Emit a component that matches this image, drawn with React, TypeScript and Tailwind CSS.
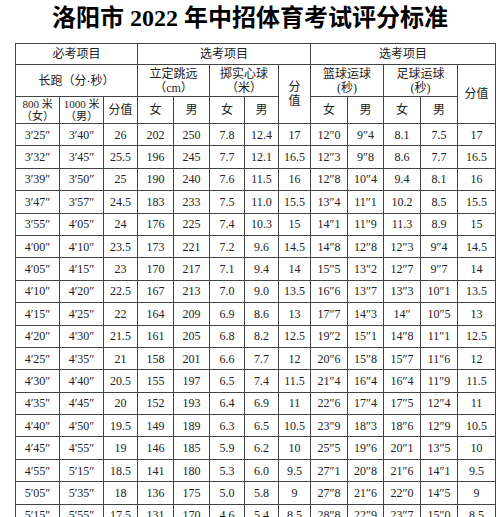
const COLS = [44, 44, 34, 36, 36, 35, 34, 32, 37, 36, 37, 37, 38];

const ROWS: string[][] = [
  ["3′25″", "3′40″", "26", "202", "250", "7.8", "12.4", "17", "12″0", "9″4", "8.1", "7.5", "17"],
  ["3′32″", "3′45″", "25.5", "196", "245", "7.7", "12.1", "16.5", "12″3", "9″8", "8.6", "7.7", "16.5"],
  ["3′39″", "3′50″", "25", "190", "240", "7.6", "11.5", "16", "12″8", "10″4", "9.4", "8.1", "16"],
  ["3′47″", "3′57″", "24.5", "183", "233", "7.5", "11.0", "15.5", "13″4", "11″1", "10.2", "8.5", "15.5"],
  ["3′55″", "4′05″", "24", "176", "225", "7.4", "10.3", "15", "14″1", "11″9", "11.3", "8.9", "15"],
  ["4′00″", "4′10″", "23.5", "173", "221", "7.2", "9.6", "14.5", "14″8", "12″8", "12″3", "9″4", "14.5"],
  ["4′05″", "4′15″", "23", "170", "217", "7.1", "9.4", "14", "15″5", "13″2", "12″7", "9″7", "14"],
  ["4′10″", "4′20″", "22.5", "167", "213", "7.0", "9.0", "13.5", "16″6", "13″7", "13″3", "10″1", "13.5"],
  ["4′15″", "4′25″", "22", "164", "209", "6.9", "8.6", "13", "17″7", "14″3", "14″", "10″5", "13"],
  ["4′20″", "4′30″", "21.5", "161", "205", "6.8", "8.2", "12.5", "19″2", "15″1", "14″8", "11″1", "12.5"],
  ["4′25″", "4′35″", "21", "158", "201", "6.6", "7.7", "12", "20″6", "15″8", "15″7", "11″6", "12"],
  ["4′30″", "4′40″", "20.5", "155", "197", "6.5", "7.4", "11.5", "21″4", "16″4", "16″4", "11″9", "11.5"],
  ["4′35″", "4′45″", "20", "152", "193", "6.4", "6.9", "11", "22″6", "17″4", "17″5", "12″4", "11"],
  ["4′40″", "4′50″", "19.5", "149", "189", "6.3", "6.5", "10.5", "23″9", "18″3", "18″6", "12″9", "10.5"],
  ["4′45″", "4′55″", "19", "146", "185", "5.9", "6.2", "10", "25″5", "19″6", "20″1", "13″5", "10"],
  ["4′55″", "5′15″", "18.5", "141", "180", "5.3", "6.0", "9.5", "27″1", "20″8", "21″6", "14″1", "9.5"],
  ["5′05″", "5′35″", "18", "136", "175", "5.0", "5.8", "9", "27″8", "21″6", "22″0", "14″5", "9"],
  ["5′15″", "5′55″", "17.5", "131", "170", "4.6", "5.4", "8.5", "28″8", "22″9", "23″7", "15″0", "8.5"],
];

const cell = "border border-[#444] p-0 text-center align-middle";

export default function App() {
  return (
    <div className="w-[500px] h-[517px] overflow-hidden bg-white text-[#222] font-['Liberation_Serif','Noto_Sans_CJK_SC',serif]">
      <h1 className="h-[43px] pt-[3px] text-center text-[24px] font-bold leading-[30px] text-black">
        洛阳市 2022 年中招体育考试评分标准
      </h1>
      <table className="ml-[15px] w-[480px] table-fixed border-collapse text-[12px] leading-[14px]">
        <colgroup>
          {COLS.map((w, i) => (
            <col key={i} style={{ width: w }} />
          ))}
        </colgroup>
        <thead>
          <tr className="h-[21px]">
            <td colSpan={3} className={cell}>必考项目</td>
            <td colSpan={5} className={cell}>选考项目</td>
            <td colSpan={5} className={cell}>选考项目</td>
          </tr>
          <tr className="h-[32px]">
            <td colSpan={3} className={cell}>长跑（分·秒）</td>
            <td colSpan={2} className={cell}>
              立定跳远
              <br />
              （cm）
            </td>
            <td colSpan={2} className={cell}>
              掷实心球
              <br />
              （米）
            </td>
            <td rowSpan={2} className={cell}>
              分
              <br />
              值
            </td>
            <td colSpan={2} className={cell}>
              篮球运球
              <br />
              (秒)
            </td>
            <td colSpan={2} className={cell}>
              足球运球
              <br />
              (秒)
            </td>
            <td rowSpan={2} className={cell}>分值</td>
          </tr>
          <tr className="h-[27px]">
            <td className={`${cell} text-[11px] leading-[12px]`}>
              800 米
              <br />
              （女）
            </td>
            <td className={`${cell} text-[11px] leading-[12px]`}>
              1000 米
              <br />
              （男）
            </td>
            <td className={cell}>分值</td>
            <td className={cell}>女</td>
            <td className={cell}>男</td>
            <td className={cell}>女</td>
            <td className={cell}>男</td>
            <td className={cell}>女</td>
            <td className={cell}>男</td>
            <td className={cell}>女</td>
            <td className={cell}>男</td>
          </tr>
        </thead>
        <tbody>
          {ROWS.map((r, i) => (
            <tr key={i} className="h-[22.4px]">
              {r.map((v, j) => (
                <td key={j} className={cell}>
                  {v}
                </td>
              ))}
            </tr>
          ))}
        </tbody>
      </table>
    </div>
  );
}
